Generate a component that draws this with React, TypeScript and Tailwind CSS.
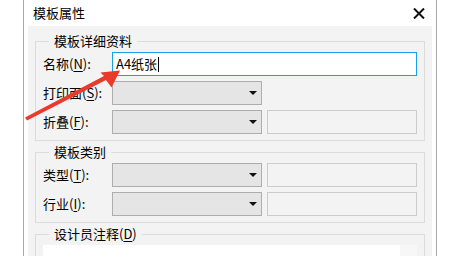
import type { ReactNode } from "react";

const font = "font-['Noto_Sans_CJK_SC','Noto_Sans',sans-serif]";

function Caret() {
  return (
    <svg width="8" height="4" viewBox="0 0 8 4" className="shrink-0">
      <path d="M0 0H8L4 4Z" fill="#111" />
    </svg>
  );
}

function Label({ text, k }: { text: string; k: string }) {
  return (
    <div className="w-[69px] shrink-0 text-[13px] leading-[16px] text-black">
      {text}(<span className="underline underline-offset-2">{k}</span>):
    </div>
  );
}

function Combo() {
  return (
    <div className="flex h-[24px] w-[150px] shrink-0 items-center justify-end border border-[#adadad] bg-[#e5e5e5] pr-[4px]">
      <Caret />
    </div>
  );
}

function Blank() {
  return <div className="h-[24px] w-[150px] shrink-0 border border-[#cccccc] bg-[#f3f3f3]" />;
}

function Row({ children }: { children: ReactNode }) {
  return <div className="flex h-[24px] items-center">{children}</div>;
}

function Group({ title, children, className = "" }: { title: ReactNode; children: ReactNode; className?: string }) {
  return (
    <fieldset className={`mx-[7px] border border-[#dcdcdc] px-[7px] pt-[3px] pb-[6px] ${className}`}>
      <legend className="ml-[6px] px-[5px] text-[13px] leading-[16px] text-black">{title}</legend>
      {children}
    </fieldset>
  );
}

export default function App() {
  return (
    <div className={`relative h-[256px] w-[474px] overflow-hidden bg-white ${font}`}>
      <div className="ml-[23px] h-[256px] w-[414px] border-x border-[#ababab] bg-white">
        <div className="flex h-[26px] items-center justify-between pl-[9px] pr-[11px]">
          <span className="text-[13px] leading-[16px] text-black">模板属性</span>
          <svg width="12" height="11" viewBox="0 0 12 11">
            <path d="M1 0.5L11 10.5M11 0.5L1 10.5" stroke="#111" strokeWidth="2" />
          </svg>
        </div>
        <div className="mx-[4px] h-[230px] bg-[#f3f3f3] pt-[7px]">
          <Group title="模板详细资料">
            <div className="flex flex-col gap-[5px]">
              <Row>
                <Label text="名称" k="N" />
                <div className="flex h-[24px] w-[305px] items-center border border-[#17a0ea] bg-white pl-[3px] text-[13px] leading-[16px] text-black">
                  A4纸张
                  <span className="ml-[1px] h-[15px] w-px bg-black" />
                </div>
              </Row>
              <Row>
                <Label text="打印面" k="S" />
                <Combo />
              </Row>
              <Row>
                <Label text="折叠" k="F" />
                <div className="flex gap-[5px]">
                  <Combo />
                  <Blank />
                </div>
              </Row>
            </div>
          </Group>
          <Group title="模板类别" className="mt-[3px]">
            <div className="flex flex-col gap-[5px]">
              <Row>
                <Label text="类型" k="T" />
                <div className="flex gap-[5px]">
                  <Combo />
                  <Blank />
                </div>
              </Row>
              <Row>
                <Label text="行业" k="I" />
                <div className="flex gap-[5px]">
                  <Combo />
                  <Blank />
                </div>
              </Row>
            </div>
          </Group>
          <Group
            title={
              <>
                设计员注释(<span className="underline underline-offset-2">D</span>)
              </>
            }
            className="mt-[3px]"
          >
            <div className="flex h-[40px]">
              <div className="flex-1 bg-white" />
              <div className="w-[17px] bg-[#f7f7f7]" />
            </div>
          </Group>
        </div>
      </div>
      <svg className="pointer-events-none absolute left-0 top-0" width="474" height="256" viewBox="0 0 474 256">
        <polygon
          points="25,117.5 104,76 100.5,72.5 120,70.5 111.5,87.5 106,80 27,120.5"
          fill="#ea3a2c"
        />
      </svg>
    </div>
  );
}
